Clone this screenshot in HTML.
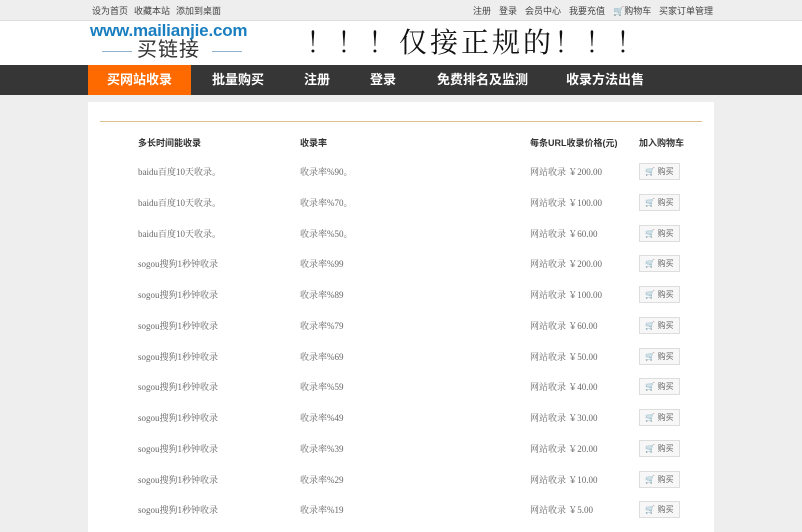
<!DOCTYPE html>
<html><head><meta charset="utf-8"><style>
body{margin:0;width:802px;height:520px;overflow:hidden;background:#eeeeee;font-family:"Liberation Sans","Noto Sans CJK SC",sans-serif;position:relative}
.top{position:absolute;left:0;top:0;width:802px;height:20px;background:#eeeeee;border-bottom:1px solid #ddd;font-size:9px;color:#444}
.top span{position:absolute;top:4px}
.hdr{position:absolute;left:0;top:21px;width:802px;height:44px;background:#fff}
.logo1{position:absolute;left:90px;top:0px;font-size:17px;line-height:20px;font-weight:bold;color:#1a7fc0;letter-spacing:-0.2px}
.logo2{position:absolute;left:137px;top:17px;font-size:20px;color:#333;letter-spacing:1px;line-height:24px}
.ln{position:absolute;top:30px;height:1px;width:30px;background:#8fb3cf}
.slogan{position:absolute;left:306px;top:0px;font-size:28px;color:#111;font-family:"Noto Serif CJK SC",serif;letter-spacing:3px}
.nav{position:absolute;left:0;top:65px;width:802px;height:30px;background:#363636}
.nav span{position:absolute;top:0;height:30px;line-height:30px;color:#fff;font-size:13px;font-weight:bold}
.on{background:#ff6a00;left:88px;width:103px;text-align:center}
.box{position:absolute;left:88px;top:102px;width:626px;height:430px;background:#fff}
.rule{position:absolute;left:12px;top:19px;width:602px;height:1px;background:#dcc090}
.r{position:absolute;font-family:"Liberation Serif","Noto Serif CJK SC",serif;font-size:9px;color:#666}
.h{font-weight:bold;color:#333;font-family:"Liberation Sans","Noto Sans CJK SC",sans-serif}
.b{position:absolute;left:551px;width:39px;height:15px;border:1px solid #ddd;background:#f7f7f7;font-size:8px;color:#666;text-align:center;line-height:15px}
</style></head><body>
<div class="top"><span style="left:92px">设为首页</span><span style="left:134px">收藏本站</span><span style="left:176px">添加到桌面</span>
<span style="left:473px">注册</span><span style="left:499px">登录</span><span style="left:525px">会员中心</span><span style="left:569px">我要充值</span><span style="left:613px">🛒购物车</span><span style="left:659px">买家订单管理</span></div>
<div class="hdr"><div class="logo1">www.mailianjie.com</div><div class="ln" style="left:102px"></div><div class="logo2">买链接</div><div class="ln" style="left:212px"></div>
<div class="slogan">！！！仅接正规的！！！</div></div>
<div class="nav"><span class="on">买网站收录</span><span style="left:212px">批量购买</span><span style="left:304px">注册</span><span style="left:370px">登录</span><span style="left:437px">免费排名及监测</span><span style="left:566px">收录方法出售</span></div>
<div class="box"><div class="rule"></div>
<div class="r h" style="left:50px;top:34px">多长时间能收录</div><div class="r h" style="left:212px;top:34px">收录率</div><div class="r h" style="left:442px;top:34px">每条URL收录价格(元)</div><div class="r h" style="left:551px;top:34px">加入购物车</div>
<div id="rows"></div>
</div>
<script>
var d=[["baidu百度10天收录。","收录率%90。","200.00"],["baidu百度10天收录。","收录率%70。","100.00"],["baidu百度10天收录。","收录率%50。","60.00"],["sogou搜狗1秒钟收录","收录率%99","200.00"],["sogou搜狗1秒钟收录","收录率%89","100.00"],["sogou搜狗1秒钟收录","收录率%79","60.00"],["sogou搜狗1秒钟收录","收录率%69","50.00"],["sogou搜狗1秒钟收录","收录率%59","40.00"],["sogou搜狗1秒钟收录","收录率%49","30.00"],["sogou搜狗1秒钟收录","收录率%39","20.00"],["sogou搜狗1秒钟收录","收录率%29","10.00"],["sogou搜狗1秒钟收录","收录率%19","5.00"]];
var h="";d.forEach(function(r,i){var y=63+i*30.75;h+='<div class="r" style="left:50px;top:'+y+'px">'+r[0]+'</div><div class="r" style="left:212px;top:'+y+'px">'+r[1]+'</div><div class="r" style="left:442px;top:'+y+'px">网站收录 ￥'+r[2]+'</div><div class="b" style="top:'+(y-2)+'px">🛒 购买</div>';});
document.getElementById("rows").outerHTML=h;
</script>
</body></html>
